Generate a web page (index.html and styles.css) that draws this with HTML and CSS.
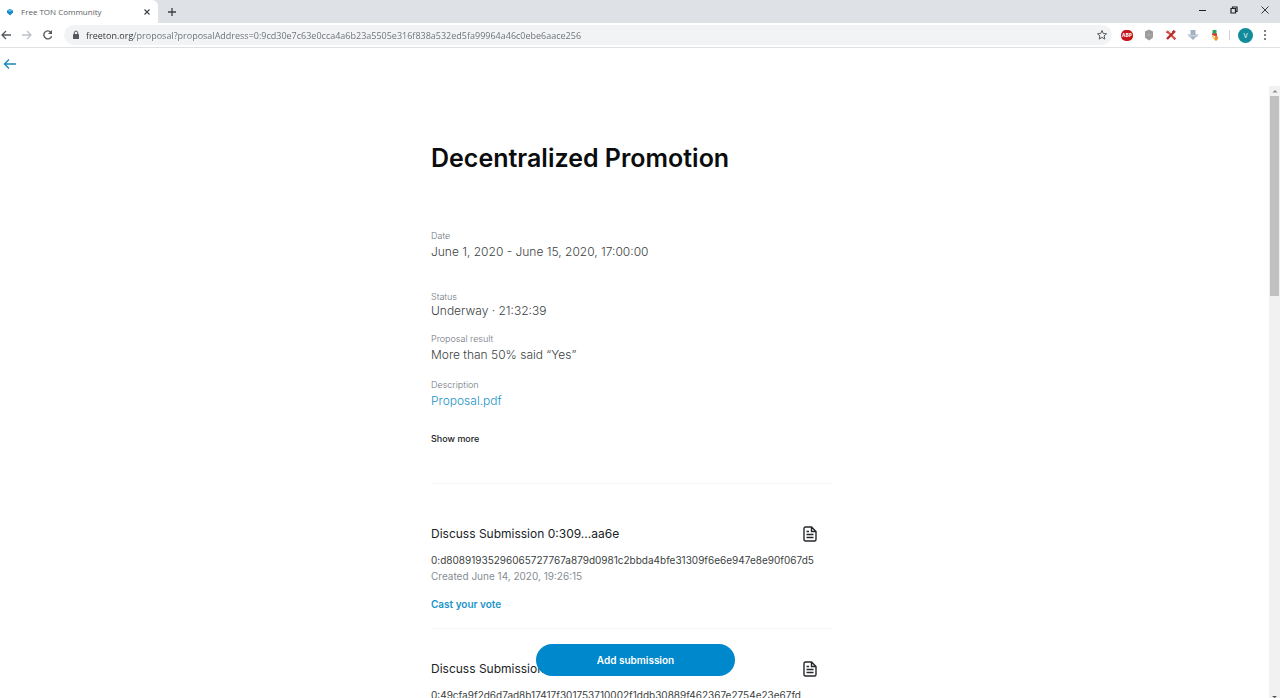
FILE: index.html
```html
<!DOCTYPE html>
<html lang="en">
<head>
    <meta charset="UTF-8">
    <meta name="viewport" content="width=device-width, initial-scale=1.0">
    <title>Free TON Community</title>
    <link rel="stylesheet" href="styles.css">
</head>
<body>
    <header class="browser">
        <div class="tabs">
            <div class="tab">
                <svg class="favicon" viewBox="0 0 8 8" width="8" height="8"><path d="M1 2.5 4 1l3 1.5v2L4 7.5 1 4.5z" fill="#1b86c4"/><path d="M1 2.5 4 1l3 1.5L4 4z" fill="#4fb4e6"/></svg>
                <span class="tab-title">Free TON Community</span>
                <button class="icon-btn" aria-label="Close tab">
                    <svg viewBox="0 0 8 8" width="8" height="8"><path d="M1.5 1.5l5 5m0-5l-5 5" stroke="#3c4043" stroke-width="1.1"/></svg>
                </button>
            </div>
            <button class="icon-btn new-tab" aria-label="New tab">
                <svg viewBox="0 0 10 10" width="10" height="10"><path d="M5 1v8M1 5h8" stroke="#3c4043" stroke-width="1.3"/></svg>
            </button>
            <div class="window-buttons">
                <button class="icon-btn" aria-label="Minimize"><svg viewBox="0 0 8 8" width="8" height="8"><path d="M0 4.5h7" stroke="#222"/></svg></button>
                <button class="icon-btn" aria-label="Restore"><svg viewBox="0 0 8 8" width="8" height="8" fill="none" stroke="#222" stroke-width="1.200"><path d="M1 2.500h4.500v4.500H1z"/><path d="M2.500 2.500V1H7v4.500H5.500"/></svg></button>
                <button class="icon-btn" aria-label="Close"><svg viewBox="0 0 8 8" width="8" height="8"><path d="M.5.5l7 7m0-7l-7 7" stroke="#222" stroke-width=".9"/></svg></button>
            </div>
        </div>
        <div class="toolbar">
            <div class="nav-buttons">
                <button class="icon-btn" aria-label="Back"><svg viewBox="0 0 12 12" width="12" height="12" fill="none" stroke="#55595d" stroke-width="1.3"><path d="M11 6H2M6 2L2 6l4 4"/></svg></button>
                <button class="icon-btn" aria-label="Forward"><svg viewBox="0 0 12 12" width="12" height="12" fill="none" stroke="#bdc1c6" stroke-width="1.3"><path d="M1 6h9M6 2l4 4-4 4"/></svg></button>
                <button class="icon-btn" aria-label="Reload"><svg viewBox="0 0 12 12" width="12" height="12"><path d="M8.800 3.200A4 4 0 1 0 9.600 7.200" fill="none" stroke="#55595d" stroke-width="1.400"/><path d="M10 1v4H6z" fill="#55595d"/></svg></button>
            </div>
            <form class="address">
                <svg viewBox="0 0 8 10" width="8" height="10"><rect x="1" y="4" width="6" height="5" rx=".6" fill="#55595d"/><path d="M2.300 4V2.800a1.700 1.700 0 0 1 3.400 0V4" fill="none" stroke="#55595d"/></svg>
                <input class="url" type="text" aria-label="Address" value="freeton.org/proposal?proposalAddress=0:9cd30e7c63e0cca4a6b23a5505e316f838a532ed5fa99964a46c0ebe6aace256">
                <button type="button" class="icon-btn" aria-label="Bookmark this page"><svg viewBox="0 0 12 12" width="12" height="12"><path d="M6 1.500l1.300 3 3.200.3-2.400 2.100.7 3.200L6 8.400l-2.800 1.700.7-3.200-2.400-2.100 3.200-.3z" fill="none" stroke="#55595d"/></svg></button>
            </form>
            <div class="extensions">
                <button class="icon-btn abp" aria-label="Adblock Plus">ABP</button>
                <button class="icon-btn" aria-label="Shield extension"><svg viewBox="0 0 12 12" width="12" height="12"><path d="M6 .5l4 2v6l-4 3-4-3v-6z" fill="#999"/><path d="M6 1v10M2 4.500l8 3M10 4.500l-8 3" stroke="#b5b5b5" stroke-width=".5"/></svg></button>
                <button class="icon-btn" aria-label="Tools extension"><svg viewBox="0 0 12 12" width="12" height="12" fill="none" stroke-width="2.400"><path d="M2 2l8 8" stroke="#d9534f"/><path d="M10 2L2 10" stroke="#b52c2c"/><path d="M1 3l2 1M7 3l2-2M9 11l2-2" stroke="#c43c3c" stroke-width="1"/></svg></button>
                <button class="icon-btn" aria-label="Download extension"><svg viewBox="0 0 12 12" width="12" height="12"><path d="M3.500 1h5v4.500h3L6 11 .5 5.500h3z" fill="#a3b3c2"/><path d="M1 6h10v1.500H1z" fill="#c3ced8"/></svg></button>
                <button class="icon-btn" aria-label="Colour extension"><svg viewBox="0 0 12 12" width="12" height="12"><path d="M3.500 1h4v4h-4z" fill="#2f9e63"/><path d="M3 4.500h5V8L3 6z" fill="#e03c31"/><path d="M3 6l4 4-1 1.500L3 8z" fill="#f6c342"/><path d="M6 7l3.500 1-1.500 3.500H6z" fill="#f08a2e"/></svg></button>
                <span class="divider"></span>
                <button class="icon-btn avatar" aria-label="Profile">V</button>
                <button class="icon-btn" aria-label="Menu"><svg viewBox="0 0 4 12" width="4" height="12" fill="#55595d"><circle cx="2" cy="2" r="1"/><circle cx="2" cy="6" r="1"/><circle cx="2" cy="10" r="1"/></svg></button>
            </div>
        </div>
    </header>

    <nav class="page-nav">
        <a class="back" href="#" aria-label="Back to proposals">
            <svg viewBox="0 0 14 12" width="14" height="12" fill="none" stroke="#1b86ba" stroke-width="1.400"><path d="M13 6H1.500M6 1.500L1.500 6 6 10.500"/></svg>
        </a>
    </nav>

    <div class="viewport">
        <main class="content">
            <h1>Decentralized Promotion</h1>

            <dl class="details">
                <div class="detail date">
                    <dt>Date</dt>
                    <dd>June 1, 2020 - June 15, 2020, 17:00:00</dd>
                </div>
                <div class="detail status">
                    <dt>Status</dt>
                    <dd>Underway · 21:32:39</dd>
                </div>
                <div class="detail">
                    <dt>Proposal result</dt>
                    <dd>More than 50% said “Yes”</dd>
                </div>
                <div class="detail">
                    <dt>Description</dt>
                    <dd><a href="#">Proposal.pdf</a></dd>
                </div>
            </dl>
            <button class="show-more">Show more</button>

            <section class="submissions">
                <article class="submission">
                    <div class="submission-head">
                        <h2>Discuss Submission 0:309...aa6e</h2>
                        <a href="#" class="doc" aria-label="Open document">
                            <svg viewBox="0 0 14 16" width="14" height="16" fill="none" stroke="#24272b" stroke-width="1.400"><path d="M2.500 1H8.500L13 5.500V13.500Q13 15 11.500 15H2.500Q1 15 1 13.500V2.500Q1 1 2.500 1zM8.500 1V5.500H13M3.500 5.500H6M3.500 8.500H10.500M3.500 11.500H10.500"/></svg>
                        </a>
                    </div>
                    <p class="hash">0:d80891935296065727767a879d0981c2bbda4bfe31309f6e6e947e8e90f067d5</p>
                    <p class="created">Created June 14, 2020, 19:26:15</p>
                    <a href="#" class="vote">Cast your vote</a>
                </article>
                <article class="submission">
                    <div class="submission-head">
                        <h2>Discuss Submission</h2>
                        <a href="#" class="doc" aria-label="Open document">
                            <svg viewBox="0 0 14 16" width="14" height="16" fill="none" stroke="#24272b" stroke-width="1.400"><path d="M2.500 1H8.500L13 5.500V13.500Q13 15 11.500 15H2.500Q1 15 1 13.500V2.500Q1 1 2.500 1zM8.500 1V5.500H13M3.500 5.500H6M3.500 8.500H10.500M3.500 11.500H10.500"/></svg>
                        </a>
                    </div>
                    <p class="hash">0:49cfa9f2d6d7ad8b17417f301753710002f1ddb30889f462367e2754e23e67fd</p>
                </article>
            </section>
        </main>

        <div class="scrollbar">
            <svg viewBox="0 0 8 10" width="8" height="10"><path d="M1.500 6.500L4 4l2.500 2.500z" fill="#8a8a8a"/></svg>
            <div class="thumb"></div>
            <svg viewBox="0 0 8 3" width="8" height="3"><path d="M1 1h5L3.500 3z" fill="#505050"/></svg>
        </div>

        <button class="add-btn">Add submission</button>
    </div>
</body>
</html>
```

FILE: styles.css
```css
:root { --blue: #0088cc; --link: #1b95c6; --text: #3c3f42; --dark: #202326; --gray: #868d94; }
* { box-sizing: border-box; }
body { margin: 0; height: 100vh; display: flex; flex-direction: column; overflow: hidden; background: #fff; color: var(--text); font-family: Inter, "Liberation Sans", sans-serif; }
h1, h2, p, dl, dd { margin: 0; }
a { color: var(--link); text-decoration: none; }
svg { display: block; flex: none; }
button { font-family: inherit; cursor: pointer; }
.icon-btn { display: flex; align-items: center; justify-content: center; padding: 0; border: 0; background: none; flex: none; }

/* browser bar */
.browser { font-family: "Open Sans", "Noto Sans", sans-serif; border-bottom: 1px solid #dfe1e5; }
.tabs { display: flex; align-items: center; height: 23px; background: #dee1e6; }
.tab { display: flex; align-items: center; width: 158px; height: 23px; padding: 0 7px 0 6px; gap: 7px; background: #fff; border-radius: 0 6px 0 0; }
.tab-title { flex: 1; font-size: 8px; color: #5a5e62; }
.new-tab { margin-left: 9px; }
.window-buttons { display: flex; gap: 23px; margin: 0 11px 4px auto; }
.toolbar { display: flex; align-items: center; height: 24px; }
.nav-buttons { display: flex; gap: 9px; width: 64px; }
.address { flex: 1; display: flex; align-items: center; height: 20px; padding: 0 4px 0 8px; gap: 6px; border-radius: 10px; background: #f1f3f4; }
/* host name is darker than the rest of the address */
.url { flex: 1; min-width: 0; padding: 0; border: 0; outline: 0; font: inherit; font-size: 9px; color: transparent; background: linear-gradient(to right, #2d3033 48px, #6a6e73 48px); -webkit-background-clip: text; background-clip: text; }
.extensions { display: flex; align-items: center; gap: 10px; padding: 0 13px 0 9px; }
.abp { width: 12px; height: 11px; border-radius: 5px; background: #c4161c; color: #fff; font-size: 5px; font-weight: 700; }
.divider { width: 1px; height: 10px; margin: 0 -2px; background: #cfd2d6; }
.avatar { width: 15px; height: 15px; border-radius: 50%; background: #128c9b; color: #fff; font-size: 7px; }

/* page */
.page-nav { height: 38px; padding: 10px 3px; display: flex; align-items: flex-start; }
.viewport { position: relative; flex: 1; min-height: 0; display: flex; overflow: hidden; }
.content { flex: 1; max-width: 407px; margin: 0 auto; padding: 56px 7px 0 0; }
h1 { font-size: 25px; line-height: 32px; font-weight: 600; color: #0b0c0d; }
.details { display: flex; flex-direction: column; gap: 14px; margin-top: 56px; }
.detail dt { font-size: 9px; line-height: 12px; font-weight: 300; color: #6f767d; }
.detail dd { font-size: 12px; line-height: 20px; font-weight: 300; }
.date { margin-bottom: 15px; }
.status dd { line-height: 16px; }
.show-more { display: block; margin-top: 20px; padding: 0; border: 0; background: none; font-size: 9px; line-height: 16px; font-weight: 500; color: var(--dark); }
.submissions { margin-top: 36px; border-top: 1px solid #f3f4f5; }
.submission { padding: 40px 0 16px; border-bottom: 1px solid #f3f4f5; }
.submissions .submission + .submission { padding-top: 30px; }
.submission-head { display: flex; align-items: center; justify-content: space-between; padding-right: 14px; }
h2 { font-size: 12px; line-height: 20px; font-weight: 400; color: var(--dark); }
.hash, .created { font-size: 10px; line-height: 16px; white-space: nowrap; }
.hash { margin-top: 8px; }
.created { color: var(--gray); }
.vote { display: block; margin-top: 12px; font-size: 10px; line-height: 16px; font-weight: 600; }
.add-btn { position: absolute; left: 50%; bottom: 22px; width: 199px; height: 32px; margin-left: -104px; padding: 0; border: 0; border-radius: 16px; background: var(--blue); color: #fff; font-size: 10px; font-weight: 600; }

.scrollbar { display: flex; flex-direction: column; align-items: center; width: 11px; background: #f1f1f1; }
.thumb { width: 9px; height: 200px; margin-bottom: auto; background: #c1c1c1; }
```
